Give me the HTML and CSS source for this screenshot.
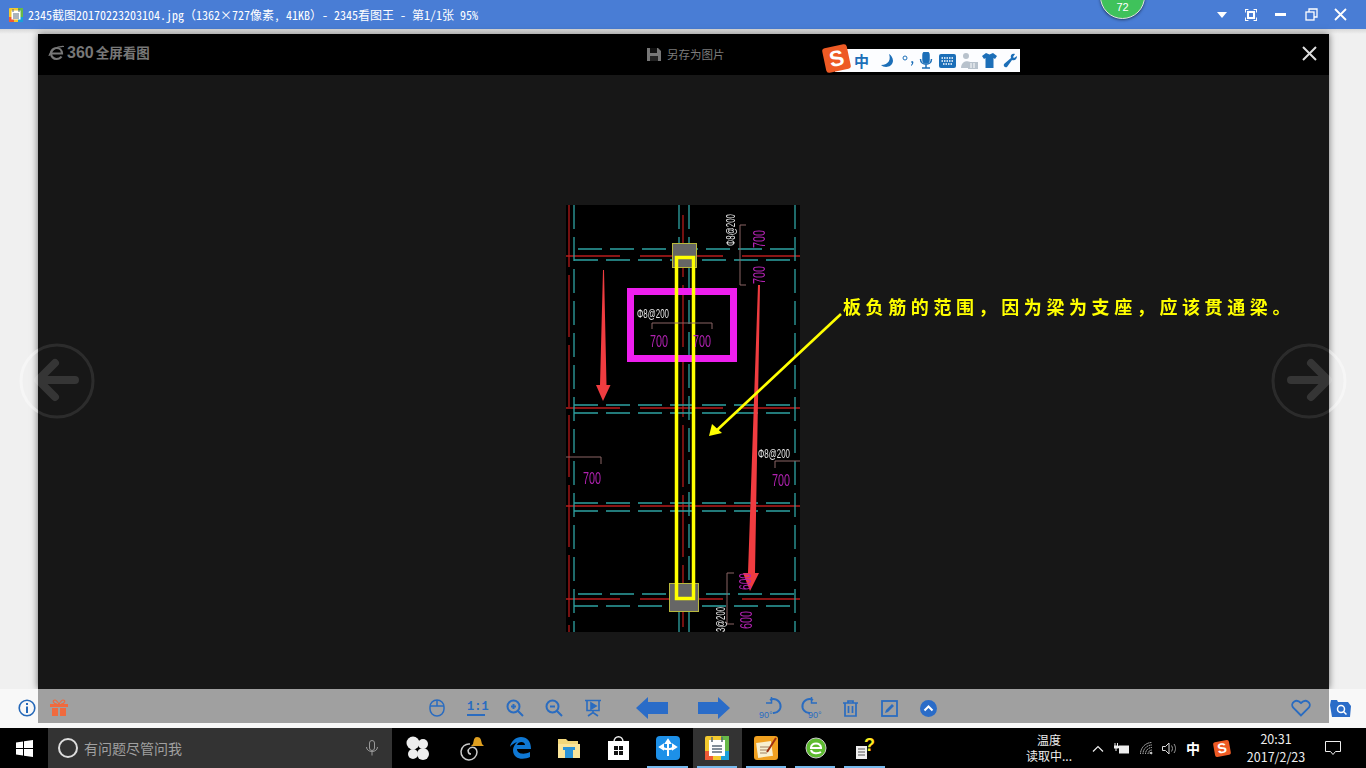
FILE: index.html
```html
<!DOCTYPE html>
<html lang="zh-CN">
<head>
<meta charset="utf-8">
<title>2345看图王</title>
<link rel="stylesheet" href="styles.css">
</head>
<body>
<div class="app">
  <header class="titlebar">
    <svg class="app-icon" viewBox="0 0 14 14"><rect width="14" height="14" rx="1" fill="#f3c92e"/><rect y="9" width="5" height="5" fill="#ee5a36"/><rect x="9" y="9" width="5" height="5" fill="#1aa0d8"/><rect x="9" width="5" height="9" fill="#67b948"/><rect x="2.5" y="2.5" width="9" height="9" fill="#fff"/><path d="M4 1v3M10 1v3M4 6h6M4 8h6M4 10h6" stroke="#5a6a78" stroke-width="1"/></svg>
    <span class="title-text">2345截图20170223203104.jpg（1362×727像素, 41KB）- 2345看图王 - 第1/1张 95%</span>
    <div class="win-controls">
      <span class="win-btn"><svg width="12" height="8" viewBox="0 0 12 8"><path d="M1 1h10L6 7z" fill="#fff"/></svg></span>
      <span class="win-btn"><svg width="12" height="12" viewBox="0 0 14 14" fill="none" stroke="#fff" stroke-width="1.200"><rect x="3.5" y="3.5" width="7" height="7" stroke-width="2.400"/><path d="M.5 4V.5H4M10 .5h3.500V4M13.500 10v3.500H10M4 13.500H.5V10"/></svg></span>
      <span class="win-btn"><svg width="12" height="4" viewBox="0 0 12 4"><rect width="11" height="3" fill="#fff"/></svg></span>
      <span class="win-btn"><svg width="13" height="13" viewBox="0 0 13 13" fill="none" stroke="#fff" stroke-width="1.300"><rect x="1" y="4" width="8" height="8"/><path d="M4 4V1h8v8H9"/></svg></span>
      <span class="win-btn"><svg width="13" height="13" viewBox="0 0 13 13"><path d="M1 1l11 11M12 1L1 12" stroke="#fff" stroke-width="1.800"/></svg></span>
    </div>
    <div class="badge">72</div>
  </header>

  <main class="stage">
    <section class="viewer">
      <div class="viewer-head">
        <div class="logo">
          <svg width="17" height="17" viewBox="0 0 17 17" fill="none" stroke="#777" stroke-width="2.200"><path d="M4 8.500h10c0-3.500-2.500-5.500-5.500-5.500S3 5.500 3 8.500 5.500 14 8.500 14c2.500 0 4-1 5-2.500"/><path d="M1 11C2 6 8 1 16 1.500" stroke-width="1.200"/></svg>
          <span class="logo-num">360</span><span class="logo-text">全屏看图</span>
        </div>
        <div class="save">
          <svg width="14" height="15" viewBox="0 0 14 15"><path d="M0 1h11l3 3v10H0z" fill="#777"/><rect x="3" y="1" width="7" height="5" fill="#111"/><rect x="3" y="9" width="8" height="5" fill="#222"/></svg>
          <span>另存为图片</span>
        </div>
        <div class="sogou">
          <span class="sogou-s">S</span>
          <span class="sogou-cn">中</span>
          <svg class="sg" width="14" height="16" viewBox="0 0 14 16"><path d="M9 1c2 5 0 11-8 11 3 3 11 3 12-4 0-3-2-6-4-7z" fill="#1c6fb8"/></svg>
          <svg class="sg sg-wide" width="14" height="16" viewBox="0 0 14 16"><circle cx="3" cy="5" r="2" fill="none" stroke="#1c6fb8"/><path d="M10 8c2 0 2 3-1 5l0-1c1-1 1-2 1-2-1 0-1-2 0-2z" fill="#1c6fb8"/></svg>
          <svg class="sg sg-mic" width="14" height="17" viewBox="0 0 14 17" fill="none" stroke="#1c6fb8" stroke-width="1.500"><rect x="4" y="0" width="6" height="11" rx="3" fill="#1c6fb8"/><path d="M1.500 7c0 7 11 7 11 0M7 12v4M3 16h8"/></svg>
          <svg class="sg" width="17" height="14" viewBox="0 0 17 14"><rect width="17" height="14" rx="2" fill="#1c6fb8"/><path d="M2.500 4h12M2.500 7h12M4 10h9" stroke="#fff" stroke-width="1.500" stroke-dasharray="1.500 1"/></svg>
          <svg class="sg sg-narrow" width="18" height="16" viewBox="0 0 18 16"><circle cx="6" cy="3" r="3" fill="#b8c2cc"/><path d="M1 15c0-8 9-8 10-5v5z" fill="#b8c2cc"/><rect x="8" y="9" width="10" height="7" fill="#b8c2cc"/><path d="M11 10v5M14 10v5" stroke="#fff"/></svg>
          <svg class="sg sg-narrow" width="15" height="15" viewBox="0 0 15 15"><path d="M4 0L0 3l2 3 1.500-1v10h8V5L13 6l2-3-4-3-3.500 1.500z" fill="#1c6fb8"/></svg>
          <svg class="sg" width="15" height="15" viewBox="0 0 15 15"><path d="M14 3l-3 2-1-1 2-3c-3-1-5 1-4 4L1 11c-1 2 1 4 3 3l5-7c3 1 5-1 5-4z" fill="#1c6fb8"/></svg>
        </div>
        <svg class="viewer-close" width="15" height="15" viewBox="0 0 15 15"><path d="M1 1l13 13M14 1L1 14" stroke="#ddd" stroke-width="2"/></svg>
      </div>

      <svg class="canvas" viewBox="38 75 1291 614">
        <rect class="cad-bg" x="566" y="205" width="234" height="427"/>
        <g class="red">
          <path d="M569 205V632M683 215V632"/>
          <path d="M566 256h54M640 256h83M742 256h58M566 408h54M640 408h83M742 408h58M566 506h64M640 506h110M755 506h45M566 599h54M640 599h83M742 599h58"/>
        </g>
        <g class="teal">
          <path d="M574 205V632M795 205V632M679 205V243M689 205V243M679 612V632M689 612V632M689 268V583"/>
          <path d="M578 249h217M574 260h221M574 405h221M574 413h221M574 503h221M574 511h221M578 594h217M574 606h221"/>
        </g>
        <rect class="col" x="672.500" y="243.500" width="24" height="24"/>
        <rect class="col" x="669.500" y="583.500" width="29" height="28"/>
        <rect class="magenta" x="630.500" y="291.500" width="103" height="67"/>
        <rect class="yellow" x="676.500" y="257.500" width="17" height="341"/>
        <path class="leader" d="M652 329v-6h60v6M746 225h-6v60h6M566 457h35v7M775 468v-7h25M734 573h-7v51h7"/>
        <path class="red-arrow" d="M603 270l1 0 2.500 115h4L603 401 596 385h4z"/>
        <path class="red-arrow" d="M758 285h2l-5 288h4l-9 18-7-18h5z"/>
        <g class="cad-white">
          <text x="637" y="318" textLength="32" lengthAdjust="spacingAndGlyphs">Φ8@200</text>
          <text x="758" y="458" textLength="32" lengthAdjust="spacingAndGlyphs">Φ8@200</text>
          <text transform="translate(735 246) rotate(-90)" textLength="32" lengthAdjust="spacingAndGlyphs">Φ8@200</text>
          <text transform="translate(725 632) rotate(-90)" textLength="25" lengthAdjust="spacingAndGlyphs">3@200</text>
        </g>
        <g class="cad-purple">
          <text x="650" y="347" textLength="18" lengthAdjust="spacingAndGlyphs">700</text>
          <text x="693" y="347" textLength="18" lengthAdjust="spacingAndGlyphs">700</text>
          <text x="583" y="484" textLength="18" lengthAdjust="spacingAndGlyphs">700</text>
          <text x="772" y="486" textLength="18" lengthAdjust="spacingAndGlyphs">700</text>
          <text transform="translate(765 248) rotate(-90)" textLength="18" lengthAdjust="spacingAndGlyphs">700</text>
          <text transform="translate(765 284) rotate(-90)" textLength="18" lengthAdjust="spacingAndGlyphs">700</text>
          <text transform="translate(751 590) rotate(-90)" textLength="17" lengthAdjust="spacingAndGlyphs">600</text>
          <text transform="translate(752 629) rotate(-90)" textLength="18" lengthAdjust="spacingAndGlyphs">600</text>
        </g>
        <path class="ann-line" d="M841 314L716 431"/>
        <path class="ann-head" d="M709 436l3-12 10 9z"/>
        <text class="annotation" x="843" y="314">板负筋的范围，因为梁为支座，应该贯通梁。</text>
      </svg>
    </section>

    <svg class="nav nav-left" viewBox="0 0 76 76">
      <defs><linearGradient id="ringL" gradientUnits="userSpaceOnUse" x1="0" y1="0" x2="76" y2="0"><stop offset=".25" class="ring-light"/><stop offset=".25" class="ring-dark"/></linearGradient></defs>
      <circle cx="38" cy="38" r="36" class="nav-ring ring-l"/><path d="M20 37h36M36 20L19 37l17 17" class="nav-arrow"/>
    </svg>
    <svg class="nav nav-right" viewBox="0 0 76 76">
      <defs><linearGradient id="ringR" gradientUnits="userSpaceOnUse" x1="0" y1="0" x2="76" y2="0"><stop offset=".763" class="ring-dark"/><stop offset=".763" class="ring-light"/></linearGradient></defs>
      <circle cx="38" cy="38" r="36" class="nav-ring ring-r"/><path d="M20 37h36M40 20l17 17-17 17" class="nav-arrow"/>
    </svg>

    <div class="toolbar">
      <div class="side side-left">
        <svg width="18" height="18" viewBox="0 0 18 18" fill="none" stroke="#2568b8"><circle cx="9" cy="9" r="7.800" stroke-width="1.600"/><path d="M9 7.500V14M9 4v2" stroke-width="2"/></svg>
      </div>
      <div class="tool-gray">
        <div class="tool-left">
          <svg width="20" height="18" viewBox="0 0 20 18"><path d="M1 5h18v3H1zM3 9h6v8H3zM11 9h6v8h-6z" fill="#f06a3e"/><path d="M10 5C8 2 7 1 6 1 3 1 4 5 8 5M10 5c2-3 3-4 4-4 3 0 2 4-2 4" fill="none" stroke="#f06a3e" stroke-width="1.200"/></svg>
        </div>
        <div class="tool-center">
          <span class="tool"><svg width="16" height="18" viewBox="0 0 16 18" fill="none" stroke="#2a6cc0" stroke-width="1.500"><rect x="1" y="1" width="14" height="16" rx="7"/><path d="M1 7h14M8 1v6"/></svg></span>
          <span class="tool one-one"><span class="one-text">1:1</span></span>
          <span class="tool"><svg width="18" height="18" viewBox="0 0 18 18" fill="none" stroke="#2a6cc0" stroke-width="2"><circle cx="7.500" cy="7.500" r="6"/><path d="M12 12l5 5M5 7.500h5M7.500 5v5"/></svg></span>
          <span class="tool"><svg width="18" height="18" viewBox="0 0 18 18" fill="none" stroke="#2a6cc0" stroke-width="2"><circle cx="7.500" cy="7.500" r="6"/><path d="M12 12l5 5M5 7.500h5"/></svg></span>
          <span class="tool"><svg width="18" height="18" viewBox="0 0 18 18" fill="none" stroke="#2a6cc0" stroke-width="1.600"><path d="M1 1.500h16M3 1.500v10h12v-10M9 11.500v2M4 17l5-3.500 5 3.500"/><path d="M7 4l5 3-5 3z" fill="#2a6cc0"/></svg></span>
          <span class="tool-arrow first"><svg width="32" height="22" viewBox="0 0 32 22"><path d="M0 11L12 0v5h20v12H12v5z" fill="#2a6cc8"/></svg></span>
          <span class="tool-arrow"><svg width="32" height="22" viewBox="0 0 32 22"><path d="M32 11L20 0v5H0v12h20v5z" fill="#2a6cc8"/></svg></span>
          <span class="tool rot"><svg width="26" height="22" viewBox="0 0 26 22" fill="none" stroke="#2a6cc0" stroke-width="2"><path d="M11 3a7 7 0 1 1 3 13"/><path d="M12.500 0v6H7" stroke-width="1.500"/><text class="rot-text" x="0" y="21">90°</text></svg></span>
          <span class="tool"><svg width="26" height="22" viewBox="0 0 26 22" fill="none" stroke="#2a6cc0" stroke-width="2"><path d="M15 3a7 7 0 1 0-3 13"/><path d="M13.500 0v6H19" stroke-width="1.500"/><text class="rot-text" x="10" y="21">90°</text></svg></span>
          <span class="tool"><svg width="15" height="17" viewBox="0 0 15 17" fill="none" stroke="#2a6cc0" stroke-width="1.700"><path d="M0 3h15M5 3V1h5v2M2 3v13h11V3M5.500 6v7M9.500 6v7"/></svg></span>
          <span class="tool"><svg width="17" height="17" viewBox="0 0 17 17"><rect x="1" y="1" width="15" height="15" fill="none" stroke="#2a6cc0" stroke-width="1.800"/><path d="M4 13l1-3 6-6 2 2-6 6z" fill="#2a6cc0"/></svg></span>
          <span class="tool"><svg width="17" height="17" viewBox="0 0 17 17"><circle cx="8.500" cy="8.500" r="8.500" fill="#2a6cc8"/><path d="M4.500 10.500l4-4 4 4" fill="none" stroke="#fff" stroke-width="2"/></svg></span>
        </div>
        <div class="tool-right">
          <svg width="20" height="18" viewBox="0 0 20 18"><path d="M10 16.500L2 8.500C-1 4 5-1 10 4c5-5 11 0 8 4.500z" fill="none" stroke="#2a6cc0" stroke-width="1.800"/></svg>
        </div>
      </div>
      <div class="side side-right">
        <svg width="21" height="18" viewBox="0 0 21 18"><path d="M1 1h6l1 2h10l3 4-1 11H2L0 6z" fill="#2a6cc8"/><circle cx="11" cy="10" r="3.500" fill="none" stroke="#fff" stroke-width="1.500"/><path d="M13.500 12.500l3 3" stroke="#fff" stroke-width="1.500"/></svg>
      </div>
    </div>
  </main>

  <footer class="taskbar">
    <div class="start"><svg width="17" height="17" viewBox="0 0 17 17"><path d="M0 2.500l7-1V8H0zM8 1.300L17 0v8H8zM0 9h7v6.500l-7-1zM8 9h9v8l-9-1.300z" fill="#fff"/></svg></div>
    <div class="search">
      <span class="cortana"></span>
      <span class="search-text">有问题尽管问我</span>
      <svg class="search-mic" width="12" height="16" viewBox="0 0 12 16" fill="none" stroke="#9a9a9a"><rect x="3.500" y=".5" width="5" height="10" rx="2.500"/><path d="M.5 7c0 6 11 6 11 0M6 12v3.500"/></svg>
    </div>
    <div class="apps">
      <span class="app-cell shift"><svg width="24" height="24" viewBox="0 0 24 24" fill="#eee"><circle cx="7" cy="7" r="6.500"/><circle cx="17" cy="8" r="5"/><circle cx="7" cy="18" r="5"/><circle cx="17" cy="18" r="6"/></svg></span>
      <span class="app-cell"><svg width="30" height="26" viewBox="0 0 30 26"><path d="M14 9a8 8 0 1 0 7 8c0-4-4-6-7-4s-2 6 1 6" fill="none" stroke="#ccc" stroke-width="1.500"/><path d="M21 2c4 0 4 3 5 7l2 2H15l2-2c1-4 1-7 4-7z" fill="#e0a020"/></svg></span>
      <span class="app-cell"><svg width="22" height="22" viewBox="0 0 22 22"><path d="M1 10C2 4 7 0 12 0c6 0 10 4 10 12H8c0 5 7 6 13 3v5c-6 3-17 3-17-7 0-3 2-6 4-8C5 6 2 8 1 10zM8 8h8c0-4-7-4-8 0z" fill="#0f78d4"/></svg></span>
      <span class="app-cell"><svg width="22" height="20" viewBox="0 0 22 20"><path d="M0 1h8l2 2h10v17H0z" fill="#f3d77a"/><rect y="6" width="22" height="14" fill="#fbe59a"/><rect x="7" y="11" width="8" height="9" fill="#2b93d8"/><rect x="5" y="9" width="12" height="3" fill="#2b93d8"/></svg></span>
      <span class="app-cell"><svg width="21" height="24" viewBox="0 0 21 24"><path d="M6 6c0-7 9-7 9 0" fill="none" stroke="#eee" stroke-width="1.500"/><path d="M0 5h21v19H0z" fill="#fff"/><path d="M6 10h4v4H6zM11 10h4v4h-4zM6 15h4v4H6zM11 15h4v4h-4z" fill="#111"/></svg></span>
      <span class="app-cell open"><svg width="24" height="24" viewBox="0 0 24 24"><rect width="24" height="24" rx="4" fill="#1d90e8"/><path d="M12 5v15M6 11c3 3 9 3 12 0M12 4l-2 3h4zM4 11l3-2v4zM20 11l-3-2v4z" fill="none" stroke="#fff" stroke-width="2"/></svg></span>
      <span class="app-cell open active"><svg width="24" height="24" viewBox="0 0 24 24"><rect width="24" height="24" rx="2" fill="#f3c92e"/><rect y="15" width="8" height="9" fill="#ee5a36"/><rect x="16" y="15" width="8" height="9" fill="#1aa0d8"/><rect x="16" width="8" height="15" fill="#67b948"/><rect x="4" y="4" width="16" height="16" fill="#fff"/><path d="M7 1v5M17 1v5M7 10h10M7 13h10M7 16h10" stroke="#5a6a78" stroke-width="1.500"/></svg></span>
      <span class="app-cell open"><svg width="24" height="24" viewBox="0 0 24 24"><rect width="24" height="24" rx="3" fill="#f0a020"/><rect x="3" y="6" width="15" height="15" transform="rotate(-8 10 13)" fill="#f8efd0"/><path d="M6 11h9M6 14h9M6 17h7" stroke="#a08060"/><path d="M22 2L13 16" stroke="#a03010" stroke-width="2"/></svg></span>
      <span class="app-cell open"><svg width="22" height="24" viewBox="0 0 22 24"><circle cx="11" cy="12" r="10" fill="#5dbb30" stroke="#ccc"/><path d="M5 12h12M6 12c0-6 10-6 10 0M6 14c1 4 7 4 10 2" fill="none" stroke="#fff" stroke-width="2"/></svg></span>
      <span class="app-cell open"><svg width="22" height="24" viewBox="0 0 22 24"><rect x="2" y="10" width="11" height="13" fill="#eee"/><path d="M4 13h7M4 16h7M4 19h7" stroke="#555"/><text class="help-mark" x="10" y="15">?</text></svg></span>
    </div>
    <div class="tray">
      <div class="weather"><span>温度</span><span>读取中...</span></div>
      <span class="tray-item"><svg width="12" height="7" viewBox="0 0 12 7"><path d="M1 6.500l5-5 5 5" fill="none" stroke="#eee" stroke-width="1.200"/></svg></span>
      <span class="tray-item"><svg width="16" height="11" viewBox="0 0 16 11"><path d="M1 0v3M3.500 0v3M0 3h4.500v2H0zM2 5v3" stroke="#eee" fill="#eee"/><rect x="5" y="2.500" width="10" height="8" fill="#eee"/></svg></span>
      <span class="tray-item"><svg width="13" height="13" viewBox="0 0 13 13" fill="none" stroke="#ccc" stroke-dasharray="1.500 .7"><path d="M.5 12a11.500 11.500 0 0 1 11.500-11.500M3 12a9 9 0 0 1 9-9M5.500 12A6.500 6.500 0 0 1 12 5.500M8 12a4 4 0 0 1 4-4"/><circle cx="11" cy="11" r="1" fill="#eee"/></svg></span>
      <span class="tray-item"><svg width="16" height="13" viewBox="0 0 16 13" fill="none" stroke="#ddd"><path d="M.5 4.500h3L7 1v11L3.500 8.500h-3z"/><path d="M9.500 3.500c1.300 2 1.300 4 0 6M12 2c2 3 2 6 0 9" stroke="#999"/></svg></span>
      <span class="tray-cn">中</span>
      <span class="tray-s">S</span>
      <div class="clock"><span>20:31</span><span>2017/2/23</span></div>
      <span class="tray-note"><svg width="16" height="15" viewBox="0 0 16 15"><path d="M.5.500h15v10h-5L8 13.500 5.500 10.500h-5z" fill="none" stroke="#eee"/></svg></span>
    </div>
  </footer>
</div>
</body>
</html>
```

FILE: styles.css
```css
* { box-sizing: border-box; }
html, body { margin: 0; height: 100%; overflow: hidden; }
body { font-family: "Noto Sans CJK SC", "Liberation Sans", sans-serif; }
.app { width: 1366px; height: 768px; display: flex; flex-direction: column; background: #f0f0f0; }

/* title bar */
.titlebar { position: relative; flex: 0 0 29px; display: flex; align-items: center; padding-left: 9px; background: #497dd5; color: #fff; }
.app-icon { width: 14px; height: 14px; margin-right: 5px; }
.title-text { font: 12px/1 "Noto Sans Mono CJK SC", "Liberation Mono", "Noto Sans CJK SC", monospace; white-space: nowrap; }
.win-controls { margin-left: auto; padding-right: 11px; display: flex; }
.win-btn { width: 30px; height: 29px; display: flex; align-items: center; justify-content: center; }
.win-btn:first-child { margin-right: -1px; padding-left: 1px; }
.win-btn:nth-child(2), .win-btn:nth-child(3), .win-btn:nth-child(4) { position: relative; left: 1px; }
.badge { position: absolute; left: 1100px; top: -26px; width: 45px; height: 45px; padding-top: 26px; border-radius: 50%; background: #3fc25b; border: 1px solid #e4e4e4; box-shadow: 0 1px 3px rgba(0,0,0,.5); font: 11px/13px "Liberation Sans", sans-serif; text-align: center; color: #fff; }

/* stage */
.stage { position: relative; flex: 1; display: flex; flex-direction: column; padding-top: 5px; background: linear-gradient(#d8d8d8, #f0f0f0 5px); }
.viewer { flex: 1; min-height: 0; margin: 0 37px 0 38px; display: flex; flex-direction: column; background: #171717; box-shadow: 0 0 7px rgba(0,0,0,.55); }
.viewer-head { position: relative; flex: 0 0 41px; display: flex; align-items: center; background: #000; padding-left: 10px; }
.logo { width: 599px; padding-bottom: 3px; display: flex; align-items: center; color: #777; font-weight: 700; }
.logo-num { margin-left: 2px; font: 700 16px/1 "Liberation Sans", sans-serif; }
.logo-text { margin-left: 2px; font-size: 13.500px; line-height: 1; white-space: nowrap; }
.save { display: flex; align-items: center; gap: 6px; color: #7c7c7c; font-size: 11.500px; line-height: 1; }
.sogou { position: absolute; left: 797px; top: 15px; width: 185px; height: 23px; display: flex; align-items: center; background: #fcfdff; padding-left: 19px; }
.sogou-s { position: absolute; left: -11px; top: -3px; width: 25px; height: 25px; transform: rotate(-12deg); border-radius: 3px; background: #ee5a24; color: #fff; font: 700 22px/25px "Liberation Sans", sans-serif; text-align: center; }
.sogou-cn { width: 20px; color: #1c6fb8; font-size: 15px; font-weight: 700; line-height: 1; }
.sg { margin-left: 6px; flex: none; }
.sg-wide { margin-left: 8px; }
.sg-mic { margin-left: 3px; }
.sg-narrow { margin-left: 4px; }
.viewer-close { position: absolute; right: 12px; top: 12px; }
.canvas { flex: 1; min-height: 0; width: 100%; display: block; }

/* drawing */
.cad-bg { fill: #000; }
.red path { fill: none; stroke: #b81c1c; stroke-width: 1.300; }
.red path:first-child { stroke-dasharray: 62 8; stroke: #9c1616; stroke-width: 1.500; }
.teal path { fill: none; stroke: #2ea3a3; stroke-width: 1.300; stroke-dasharray: 24 8; }
.col { fill: #666; stroke: #b8b83c; stroke-width: 1; }
.magenta { fill: none; stroke: #ee1fee; stroke-width: 7; }
.yellow { fill: none; stroke: #ffff00; stroke-width: 3.500; }
.leader { fill: none; stroke: #8a6565; stroke-width: 1; }
.red-arrow { fill: #f03c40; }
.cad-white { opacity: .99; }
.cad-white text { fill: #e8e8e8; font: 12px "Liberation Sans", sans-serif; }
.cad-purple { opacity: .99; }
.cad-purple text { fill: #b424b4; font: 17px "Liberation Sans", sans-serif; }
.ann-line { fill: none; stroke: #ffff00; stroke-width: 2.600; }
.ann-head { fill: #ffff00; }
.annotation { fill: #ffff00; font: 700 18px "Noto Sans CJK SC", sans-serif; letter-spacing: 4.600px; }

/* prev / next overlays */
.nav { position: absolute; top: 314px; width: 76px; height: 76px; }
.nav-left { left: 19px; }
.nav-right { left: 1271px; }
.nav-ring { fill: none; stroke-width: 3; }
.ring-l { stroke: url(#ringL); }
.ring-r { stroke: url(#ringR); }
.ring-light { stop-color: #fff; stop-opacity: .4; }
.ring-dark { stop-color: #fff; stop-opacity: .09; }
.nav-arrow { fill: none; stroke: rgba(255,255,255,.13); stroke-width: 8; stroke-linecap: round; stroke-linejoin: round; }

/* viewer toolbar */
.toolbar { flex: 0 0 39px; display: flex; align-items: flex-start; background: #f8f8f8; }
.side { height: 38px; display: flex; align-items: center; }
.side-left { flex: 0 0 38px; justify-content: flex-end; padding-right: 2px; }
.side-right { flex: 0 0 37px; padding-left: 1px; }
.tool-gray { flex: 1; height: 34px; padding-top: 4px; display: grid; grid-template-columns: 1fr auto 1fr; align-items: center; background: #a0a0a0; }
.tool-left { padding-left: 11px; display: flex; }
.tool-right { display: flex; justify-content: flex-end; padding-right: 18px; }
.tool-center { display: flex; align-items: center; padding-right: 2px; }
.tool { width: 39px; display: flex; align-items: center; justify-content: center; }
.one-text { display: block; width: 18px; border-bottom: 2px solid #2a6cc0; color: #2a6cc0; font: 700 12px/13px "Liberation Mono", monospace; text-align: center; }
.tool-arrow { width: 62px; display: flex; justify-content: center; }
.tool-arrow.first { margin-left: 8px; }
.rot { margin-left: 8px; }
.rot-text { font: 9px "Liberation Sans", sans-serif; fill: #2a6cc0; stroke: none; }

/* taskbar */
.taskbar { flex: 0 0 40px; display: flex; background: #000; color: #eee; }
.start { width: 48px; display: flex; align-items: center; justify-content: center; }
.search { width: 344px; display: flex; align-items: center; background: #333; padding-left: 10px; }
.cortana { width: 20px; height: 20px; border-radius: 50%; border: 2.500px solid #ddd; margin-right: 6px; flex: none; }
.search-text { color: #a0a0a0; font-size: 14px; line-height: 1; white-space: nowrap; }
.search-mic { margin-left: auto; margin-right: 14px; }
.apps { display: flex; margin-left: 5px; }
.app-cell { position: relative; width: 49.250px; display: flex; align-items: center; justify-content: center; }
.app-cell.shift svg { margin-right: 7px; }
.app-cell.open::after { content: ""; position: absolute; left: 4px; right: 5px; bottom: 0; height: 2px; background: #76b9ed; }
.app-cell.active { background: #333; }
.help-mark { font: 700 18px "Liberation Sans", sans-serif; fill: #ffe820; }
.tray { margin-left: auto; display: flex; align-items: center; font-size: 12px; }
.weather { width: 70px; margin-right: 2px; display: flex; flex-direction: column; align-items: center; line-height: 16px; white-space: nowrap; }
.tray-item { width: 24px; display: flex; justify-content: center; }
.tray-cn { width: 22px; text-align: center; font-size: 14px; font-weight: 700; color: #fff; line-height: 1; }
.tray-s { width: 16px; height: 15px; margin: 0 14px 0 10px; transform: rotate(-10deg); border-radius: 2px; background: #ee5a24; color: #fff; font: 700 14px/15px "Liberation Sans", sans-serif; text-align: center; }
.clock { width: 64px; display: flex; flex-direction: column; align-items: center; font-size: 12.500px; line-height: 18px; white-space: nowrap; }
.tray-note { width: 58px; padding-left: 17px; display: flex; }
```
